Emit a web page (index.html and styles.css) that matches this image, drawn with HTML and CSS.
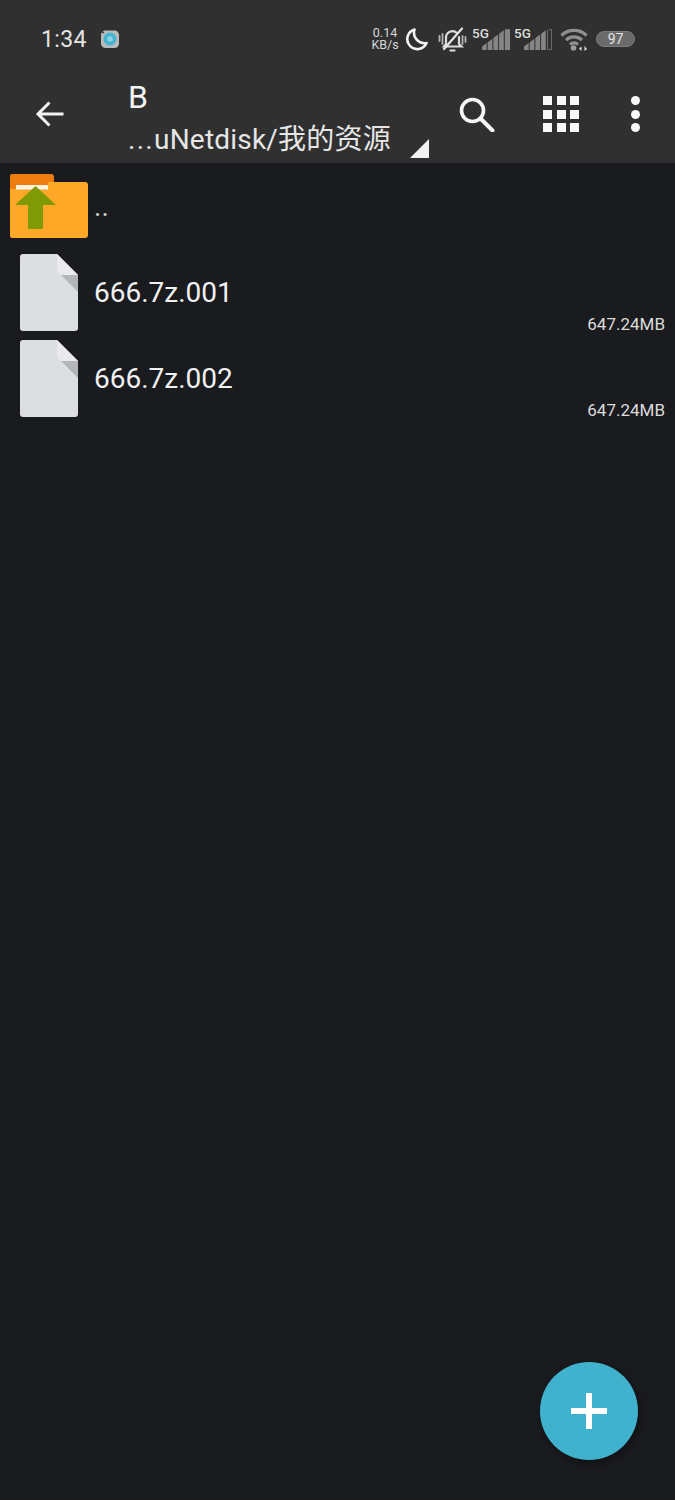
FILE: index.html
```html
<!DOCTYPE html>
<html lang="zh">
<head>
<meta charset="utf-8">
<title>Files</title>
<link rel="stylesheet" href="styles.css">
</head>
<body>
<div class="app">
  <header class="header">
    <div class="status">
      <div class="status-left">
        <span class="time">1:34</span>
        <svg class="app-badge" viewBox="0 0 20 20"><rect x="1" y="1.500" width="18" height="17.500" rx="4.500" fill="#b9bcbc"/><circle cx="10" cy="10" r="6.500" fill="#45b4d2"/><circle cx="10" cy="10" r="2.800" fill="#8fd3e4"/><path d="M1 2l3 2" stroke="#333" stroke-width="1.500"/></svg>
      </div>
      <div class="status-right">
        <div class="speed"><span>0.14</span><span>KB/s</span></div>
        <svg class="moon" viewBox="0 0 24 24"><path d="M9.500 2.500A10 10 0 1 0 21.500 16 A10.500 10.500 0 0 1 9.500 2.500Z" fill="none" stroke="#f2f2f2" stroke-width="2.600" stroke-linejoin="round"/></svg>
        <svg class="bell" viewBox="0 0 29 25"><g fill="none" stroke-linecap="round"><path d="M8 17V11a6.500 6.500 0 0 1 11-5M21 10v7l2.500 2.500H6l2-2.500" stroke="#dcdcdc" stroke-width="2.200"/><path d="M6 22L24 1.500" stroke="#e4e4e4" stroke-width="2.200"/><path d="M1.500 9v5M4.500 7v10M24.500 9v8M27.500 10v5" stroke="#b4b4b4" stroke-width="1.800"/><path d="M12.500 23.500h4" stroke="#dcdcdc" stroke-width="2.200"/></g></svg>
        <div class="signal">
          <span class="sig-label">5G</span>
          <svg class="bars" viewBox="0 0 28 21"><path d="M0 21v-3.500l4.700-3.500V21zM5.700 21V13.200l4.700-3.500V21zM11.400 21V9l4.700-3.500V21zM17.100 21V4.700l4.700-3.500V21zM22.800 21V.4L28 0v21z" fill="#858585"/></svg>
        </div>
        <div class="signal">
          <span class="sig-label">5G</span>
          <svg class="bars" viewBox="0 0 28 21"><path d="M0 21v-3.500l4.700-3.500V21zM5.700 21V13.200l4.700-3.500V21zM11.400 21V9l4.700-3.500V21zM17.100 21V4.700l4.700-3.500V21z" fill="#858585"/><path d="M23.500 20.500V1.500l4-1.200v20.200z" fill="none" stroke="#6a6a6a"/></svg>
        </div>
        <svg class="wifi" viewBox="1 0 28 24"><g fill="none" stroke="#8f8f8f" stroke-width="3.200"><path d="M2.500 8.500a18 18 0 0 1 25 0"/><path d="M7 13a12 12 0 0 1 16 0"/><path d="M11 17.500a6 6 0 0 1 8 0"/></g><circle cx="14.500" cy="21" r="2.800" fill="#9a9a9a"/><path d="M22.500 24v-4.500l-2.500 2zM25.500 19v5l2.500-2z" fill="#e6e6e6"/></svg>
        <div class="battery"><span>97</span></div>
      </div>
    </div>
    <div class="toolbar">
      <svg class="back" viewBox="0 0 30 30"><path d="M28.500 15H3.500M14.500 3.500L3 15l11.500 11.500" fill="none" stroke="#f2f2f2" stroke-width="3"/></svg>
      <div class="titles">
        <div class="title">B</div>
        <div class="path-row">
          <div class="path"><span class="dots-text">...</span>uNetdisk/我的资源</div>
          <span class="corner"></span>
        </div>
      </div>
      <div class="actions">
        <svg class="search" viewBox="0 0 36 35"><circle cx="13.500" cy="13.500" r="11" fill="none" stroke="#f6f6f6" stroke-width="3.600"/><path d="M21.500 21.500l12 12" stroke="#f6f6f6" stroke-width="4" stroke-linecap="round"/></svg>
        <div class="grid-icon"><i></i><i></i><i></i><i></i><i></i><i></i><i></i><i></i><i></i></div>
        <div class="dots"><i></i><i></i><i></i></div>
      </div>
    </div>
  </header>
  <main class="list">
    <div class="row">
      <div class="icon-box">
        <svg class="folder" viewBox="0 0 78 64"><path d="M2 0h39a3 3 0 0 1 3 3v6h-6v8H0V2a2 2 0 0 1 2-2z" fill="#ee7d10"/><path d="M38 8h37a3 3 0 0 1 3 3v50a3 3 0 0 1-3 3H2a2 2 0 0 1-2-2V15h38z" fill="#ffa726"/><rect x="6" y="11" width="32" height="4.500" fill="#fff3e0"/><path d="M25.500 12L46 31H33V55H18V31H5z" fill="#7f9a04"/></svg>
      </div>
      <div class="name up">..</div>
    </div>
    <div class="row">
      <div class="icon-box">
        <svg class="file" viewBox="0 0 58 77"><path d="M3 0h34l21 21v53a3 3 0 0 1-3 3H3a3 3 0 0 1-3-3V3a3 3 0 0 1 3-3z" fill="#dddee0"/><path d="M37 0l21 21H43a6 6 0 0 1-6-6z" fill="#e9eaeb"/><path d="M41 21h17v17z" fill="#b4b5b6"/></svg>
      </div>
      <div class="name">666.7z.001</div>
      <div class="size">647.24MB</div>
    </div>
    <div class="row">
      <div class="icon-box">
        <svg class="file" viewBox="0 0 58 77"><path d="M3 0h34l21 21v53a3 3 0 0 1-3 3H3a3 3 0 0 1-3-3V3a3 3 0 0 1 3-3z" fill="#dddee0"/><path d="M37 0l21 21H43a6 6 0 0 1-6-6z" fill="#e9eaeb"/><path d="M41 21h17v17z" fill="#b4b5b6"/></svg>
      </div>
      <div class="name">666.7z.002</div>
      <div class="size">647.24MB</div>
    </div>
  </main>
  <button class="fab" aria-label="add"><span class="plus"></span></button>
</div>
</body>
</html>
```

FILE: styles.css
```css
* { box-sizing: border-box; }
html, body { margin: 0; padding: 0; }
body { background: #1a1b1f; font-family: Roboto, "Noto Sans CJK SC", sans-serif; color: #f2f2f2; }
.app { position: relative; width: 675px; height: 1500px; overflow: hidden; background: #1a1b1f; }

.header { background: #303030; height: 163px; }
.status { height: 72px; padding: 6px 40px 0 41px; display: flex; align-items: center; justify-content: space-between; }
.status-left { display: flex; align-items: center; gap: 13px; }
.time { font-size: 23px; letter-spacing: .4px; color: #e4e4e4; }
.app-badge { width: 20px; height: 20px; display: block; }
.status-right { display: flex; align-items: center; }
.speed { display: flex; flex-direction: column; align-items: center; font-size: 12.500px; line-height: 12px; color: #d8d8d8; width: 28px; }
.moon { width: 24px; height: 24px; margin-left: 6px; }
.bell { width: 29px; height: 25px; margin-left: 9px; }
.signal { position: relative; width: 38px; height: 22px; margin-left: 4px; }
.bell + .signal { margin-left: 5px; }
.sig-label { position: absolute; left: 0; top: -1px; font-size: 13.500px; font-weight: 500; line-height: 12px; color: #dcdcdc; }
.bars { position: absolute; right: 0; bottom: 0; width: 28px; height: 21px; }
.wifi { width: 28px; height: 24px; margin-left: 8px; }
.battery { width: 39px; height: 16px; margin-left: 8px; border-radius: 8px; background: #6a6a6a; border: 1px solid #7c7c7c; display: flex; align-items: center; justify-content: center; }
.battery span { font-size: 14px; line-height: 14px; color: #e2e2e2; }

.toolbar { height: 91px; display: flex; align-items: center; padding-left: 35px; }
.back { width: 30px; height: 30px; flex: none; margin-bottom: 8px; }
.titles { margin-left: 63px; width: 302px; flex: none; }
.title { font-size: 32px; line-height: 44px; color: #f4f4f4; margin-top: -3px; margin-bottom: 3px; }
.path-row { display: flex; align-items: flex-end; }
.path { font-size: 28px; line-height: 36px; color: #e6e6e6; white-space: nowrap; width: 282px; flex: none; letter-spacing: .2px; }
.dots-text { letter-spacing: 1.300px; }
.corner { width: 0; height: 0; border-style: solid; border-width: 0 0 19px 19px; border-color: transparent transparent #f2f2f2 transparent; }
.actions { display: flex; align-items: center; margin-left: 29px; margin-bottom: 7px; }
.search { width: 36px; height: 35px; flex: none; }
.grid-icon { display: grid; grid-template-columns: repeat(3, 9px); grid-auto-rows: 9px; gap: 4.500px; margin-left: 48px; }
.grid-icon i { background: #f8f8f8; }
.dots { display: flex; flex-direction: column; gap: 4.500px; margin-left: 52px; }
.dots i { width: 9px; height: 9px; border-radius: 50%; background: #f8f8f8; }

.list { display: flex; flex-direction: column; }
.row { display: flex; align-items: center; height: 86px; padding: 0 10px; }
.row:first-child { height: 87px; }
.icon-box { width: 78px; flex: none; display: flex; justify-content: center; }
.folder { width: 78px; height: 64px; display: block; margin-top: -2px; }
.file { width: 58px; height: 77px; display: block; margin: -1px 0 0 -1px; }
.name { flex: 1; margin-left: 6px; font-size: 28px; line-height: 36px; color: #f0f0f0; white-space: nowrap; }
.name.up { color: #d0d0d0; }
.size { align-self: flex-end; font-size: 17px; line-height: 20px; color: #dcdcdc; margin-bottom: 2px; }

.fab { position: absolute; left: 540px; top: 1362px; width: 98px; height: 98px; border: 0; padding: 0; border-radius: 50%; background: #40b2cd; box-shadow: 2px 3px 8px rgba(0,0,0,.4); display: flex; align-items: center; justify-content: center; }
.plus { width: 36px; height: 36px; background: linear-gradient(#fff,#fff) center/36px 6px no-repeat, linear-gradient(#fff,#fff) center/6px 36px no-repeat; }
```
